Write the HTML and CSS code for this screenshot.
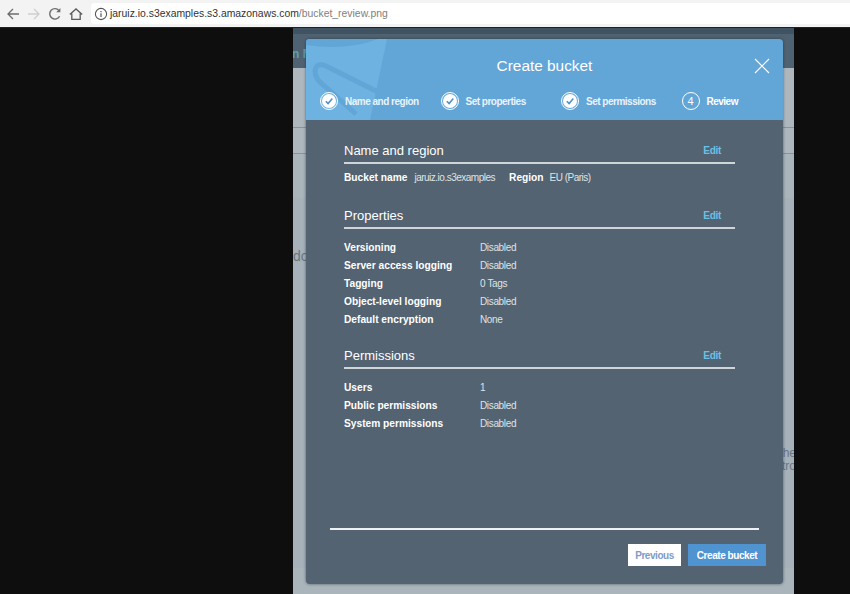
FILE: index.html
```html
<!DOCTYPE html>
<html lang="en">
<head>
<meta charset="UTF-8">
<title>bucket_review.png</title>
<link rel="stylesheet" href="styles.css">
</head>
<body>
    <div class="toolbar">
        <svg class="nav-icon" width="16" height="16" viewBox="0 0 16 16"><path d="M14 8H3M8 3L3 8l5 5" fill="none" stroke="#6d6d6d" stroke-width="1.3"/></svg>
        <svg class="nav-icon" width="16" height="16" viewBox="0 0 16 16"><path d="M2 8h11M8 3l5 5-5 5" fill="none" stroke="#cfcfcf" stroke-width="1.3"/></svg>
        <svg class="nav-icon" width="16" height="16" viewBox="0 0 16 16"><path d="M12.6 10.2A5.2 5.2 0 1 1 12 4.6" fill="none" stroke="#6d6d6d" stroke-width="1.4"/><path d="M13.4 2v4.2H9.2z" fill="#6d6d6d"/></svg>
        <svg class="nav-icon" width="16" height="16" viewBox="0 0 16 16"><path d="M1.8 8.6L8 3l6.2 5.6M3.8 7.4v6h8.4v-6" fill="none" stroke="#5c5c5c" stroke-width="1.3"/></svg>
        <div class="address">
            <svg width="14" height="14" viewBox="0 0 14 14"><circle cx="7" cy="7" r="5.6" fill="none" stroke="#555" stroke-width="1.1"/><path d="M7 6.2v3.8M7 4v1.2" stroke="#555" stroke-width="1.2"/></svg>
            <span class="host">jaruiz.io.s3examples.s3.amazonaws.com</span><span class="path">/bucket_review.png</span>
        </div>
    </div>

    <div class="stage">
        <div class="page">
            <div class="page-top"><span class="page-top-text">n M</span></div>
            <div class="page-row page-row-a"></div>
            <div class="page-row page-row-b"></div>
            <div class="page-row page-row-c">
                <p class="page-text-left">do</p>
                <p class="page-text-right">the<br>tro</p>
            </div>
            <div class="page-bottom"></div>
        </div>

        <div class="modal">
            <div class="modal-head">
                <svg class="watermark" width="100" height="81" viewBox="0 0 100 81">
                    <path d="M0 0H81L64 81H0z" fill="#6db2e0"/>
                    <path d="M0 0H72Q40 12 0 6z" fill="#62a5d7"/>
                    <path d="M72 53L20 27Q10 23 9 32Q9 39 15 44L50 75M80 45Q86 50 88 60Q86 70 66 79" fill="none" stroke="#62a5d7" stroke-width="5"/>
                </svg>
                <h1 class="modal-title">Create bucket</h1>
                <svg class="close" width="16" height="16" viewBox="0 0 16 16"><path d="M1 1l14 14M15 1L1 15" stroke="#fff" stroke-width="1.2"/></svg>
                <div class="steps">
                    <div class="step">
                        <span class="step-mark"><svg width="14" height="14" viewBox="0 0 14 14"><circle cx="7" cy="7" r="7" fill="#fff"/><path d="M3.8 7.2l2.3 2.4 4.2-5" fill="none" stroke="#4f90c6" stroke-width="1.5"/></svg></span>
                        Name and region
                    </div>
                    <div class="step">
                        <span class="step-mark"><svg width="14" height="14" viewBox="0 0 14 14"><circle cx="7" cy="7" r="7" fill="#fff"/><path d="M3.8 7.2l2.3 2.4 4.2-5" fill="none" stroke="#4f90c6" stroke-width="1.5"/></svg></span>
                        Set properties
                    </div>
                    <div class="step">
                        <span class="step-mark"><svg width="14" height="14" viewBox="0 0 14 14"><circle cx="7" cy="7" r="7" fill="#fff"/><path d="M3.8 7.2l2.3 2.4 4.2-5" fill="none" stroke="#4f90c6" stroke-width="1.5"/></svg></span>
                        Set permissions
                    </div>
                    <div class="step step-current">
                        <span class="step-mark step-num">4</span>
                        Review
                    </div>
                </div>
            </div>

            <div class="modal-body">
                <div class="section section-name">
                    <div class="section-head">
                        <h2>Name and region</h2>
                        <a class="edit">Edit</a>
                    </div>
                    <div class="inline-row">
                        <b>Bucket name</b><span class="inline-val">jaruiz.io.s3examples</span>
                        <b class="inline-key">Region</b><span class="inline-val">EU (Paris)</span>
                    </div>
                </div>

                <div class="section section-props">
                    <div class="section-head">
                        <h2>Properties</h2>
                        <a class="edit">Edit</a>
                    </div>
                    <div class="info-row"><b>Versioning</b><span>Disabled</span></div>
                    <div class="info-row"><b>Server access logging</b><span>Disabled</span></div>
                    <div class="info-row"><b>Tagging</b><span>0 Tags</span></div>
                    <div class="info-row"><b>Object-level logging</b><span>Disabled</span></div>
                    <div class="info-row"><b>Default encryption</b><span>None</span></div>
                </div>

                <div class="section">
                    <div class="section-head">
                        <h2>Permissions</h2>
                        <a class="edit">Edit</a>
                    </div>
                    <div class="info-row"><b>Users</b><span>1</span></div>
                    <div class="info-row"><b>Public permissions</b><span>Disabled</span></div>
                    <div class="info-row"><b>System permissions</b><span>Disabled</span></div>
                </div>
            </div>

            <div class="modal-foot">
                <button class="btn btn-prev">Previous</button>
                <button class="btn btn-create">Create bucket</button>
            </div>
        </div>
    </div>
</body>
</html>
```

FILE: styles.css
```css
*{
    box-sizing: border-box;
}
html, body{
    height: 100%;
}
body{
    margin: 0;
    width: 850px;
    height: 594px;
    overflow: hidden;
    display: flex;
    flex-direction: column;
    font-family: "Liberation Sans", Arial, sans-serif;
    background: #0e0e0e;
}

/* browser bar */
.toolbar{
    height: 28px;
    flex: none;
    display: flex;
    align-items: center;
    padding: 0 0 0 5px;
    background: #f3f3f3;
    border-bottom: 1px solid #222;
}
.nav-icon{
    margin-right: 5px;
    flex: none;
}
.address{
    height: 21px;
    width: 759px;
    margin-left: 2px;
    padding-left: 3px;
    display: flex;
    align-items: center;
    background: #fff;
    border-radius: 3px 0 0 3px;
    font-size: 10.4px;
}
.address svg{
    margin-right: 2px;
}
.host{
    color: #333;
}
.path{
    color: #808080;
}

/* screenshot area */
.stage{
    flex: 1;
    position: relative;
    display: flex;
    justify-content: flex-start;
}
.page{
    width: 501px;
    margin-left: 293px;
    display: flex;
    flex-direction: column;
    overflow: hidden;
    background: #a9b4bb;
    color: #6b7680;
    font-size: 13px;
}
.page-top{
    height: 40px;
    flex: none;
    padding-top: 13px;
    background: #4e6272;
    border-top: 6px solid #3f5363;
    font-size: 12px;
    font-weight: bold;
    line-height: 14px;
}
.page-top-text{
    color: #5f9fb0;
    margin-left: -1px;
}
.page-row{
    flex: none;
    border-bottom: 1px solid #88939b;
}
.page-row-a{
    height: 60px;
    background: #adb7bd;
}
.page-row-b{
    height: 26px;
    background: #adb7bd;
}
.page-row-c{
    height: 370px;
    border: 0;
    background: #a6b1b9;
}
.page-row-b + .page-row-c{
    margin-top: 44px;
}
.page-text-left{
    margin: 0;
    padding-top: 50px;
    font-size: 14px;
}
.page-text-right{
    margin: 183px -2px 0 0;
    text-align: right;
    font-size: 12px;
    line-height: 13px;
}
.page-bottom{
    flex: 1;
    background: #a9b4bb;
}

/* dialog */
.modal{
    position: absolute;
    left: 306px;
    top: 11px;
    width: 477px;
    height: 545px;
    display: flex;
    flex-direction: column;
    background: #536372;
    border-radius: 4px;
    overflow: hidden;
    box-shadow: 0 0 3px rgba(40, 50, 60, 0.7);
    color: #fff;
}
.modal-head{
    height: 81px;
    flex: none;
    position: relative;
    background: #62a5d7;
    overflow: hidden;
}
.watermark{
    position: absolute;
    left: 0;
    top: 0;
}
.modal-title{
    position: relative;
    margin: 0;
    padding-top: 17px;
    text-align: center;
    font-size: 15.4px;
    line-height: 20px;
    font-weight: normal;
    color: #fff;
}
.close{
    position: absolute;
    top: 19px;
    right: 13px;
}
.steps{
    position: relative;
    margin-top: 15px;
    padding-left: 14px;
    display: grid;
    grid-template-columns: repeat(4, 120.5px);
}
.step{
    display: flex;
    align-items: center;
    gap: 7px;
    height: 20px;
    font-size: 10px;
    letter-spacing: -0.5px;
    font-weight: bold;
    color: #eaf3fa;
}
.step-mark{
    width: 18px;
    height: 18px;
    flex: none;
    display: flex;
    align-items: center;
    justify-content: center;
    border: 1px solid #fff;
    border-radius: 50%;
}
.step-mark svg{
    display: block;
}
.step-current{
    color: #fff;
}
.step-num{
    font-weight: normal;
    font-size: 11px;
    letter-spacing: 0;
    border-width: 1.3px;
}

.modal-body{
    flex: 1;
    padding: 21px 48px 0 38px;
}
.section{
    margin-bottom: 18px;
}
.section-name{
    margin-bottom: 21px;
}
.section-head{
    height: 23px;
    padding-bottom: 2px;
    display: flex;
    justify-content: space-between;
    align-items: center;
    border-bottom: 2px solid #d0d5d9;
    margin-bottom: 10px;
}
.section-head h2{
    margin: 0;
    font-size: 13px;
    font-weight: normal;
    color: #fff;
}
.edit{
    font-size: 10px;
    letter-spacing: -0.3px;
    font-weight: bold;
    color: #6cc0e6;
    margin-right: 14px;
}
.inline-row{
    display: flex;
    margin-top: -3px;
    font-size: 10px;
    line-height: 14px;
    color: #dfe3e7;
}
.inline-row b{
    font-size: 10.2px;
    color: #fff;
    margin-right: 7px;
}
.inline-row .inline-key{
    margin-left: 14px;
    margin-right: 6px;
}
.inline-val{
    letter-spacing: -0.5px;
}
.info-row{
    display: flex;
    height: 17.8px;
    align-items: center;
    font-size: 10px;
    letter-spacing: -0.35px;
    color: #dfe3e7;
}
.info-row b{
    width: 136px;
    flex: none;
    font-size: 10.2px;
    letter-spacing: 0;
    color: #fff;
}

.modal-foot{
    flex: none;
    height: 56px;
    margin: 0 24px;
    padding: 14px 0 0 0;
    display: flex;
    justify-content: flex-end;
    gap: 7px;
    border-top: 2px solid #eef0f2;
}
.btn{
    height: 22px;
    padding: 0;
    border: 0;
    font-family: inherit;
    font-size: 10px;
    letter-spacing: -0.45px;
    font-weight: bold;
}
.btn-prev{
    width: 53px;
    background: #fff;
    color: #7e9cc6;
}
.btn-create{
    width: 78px;
    margin-right: -7px;
    background: #4f94d0;
    color: #fff;
}
```
